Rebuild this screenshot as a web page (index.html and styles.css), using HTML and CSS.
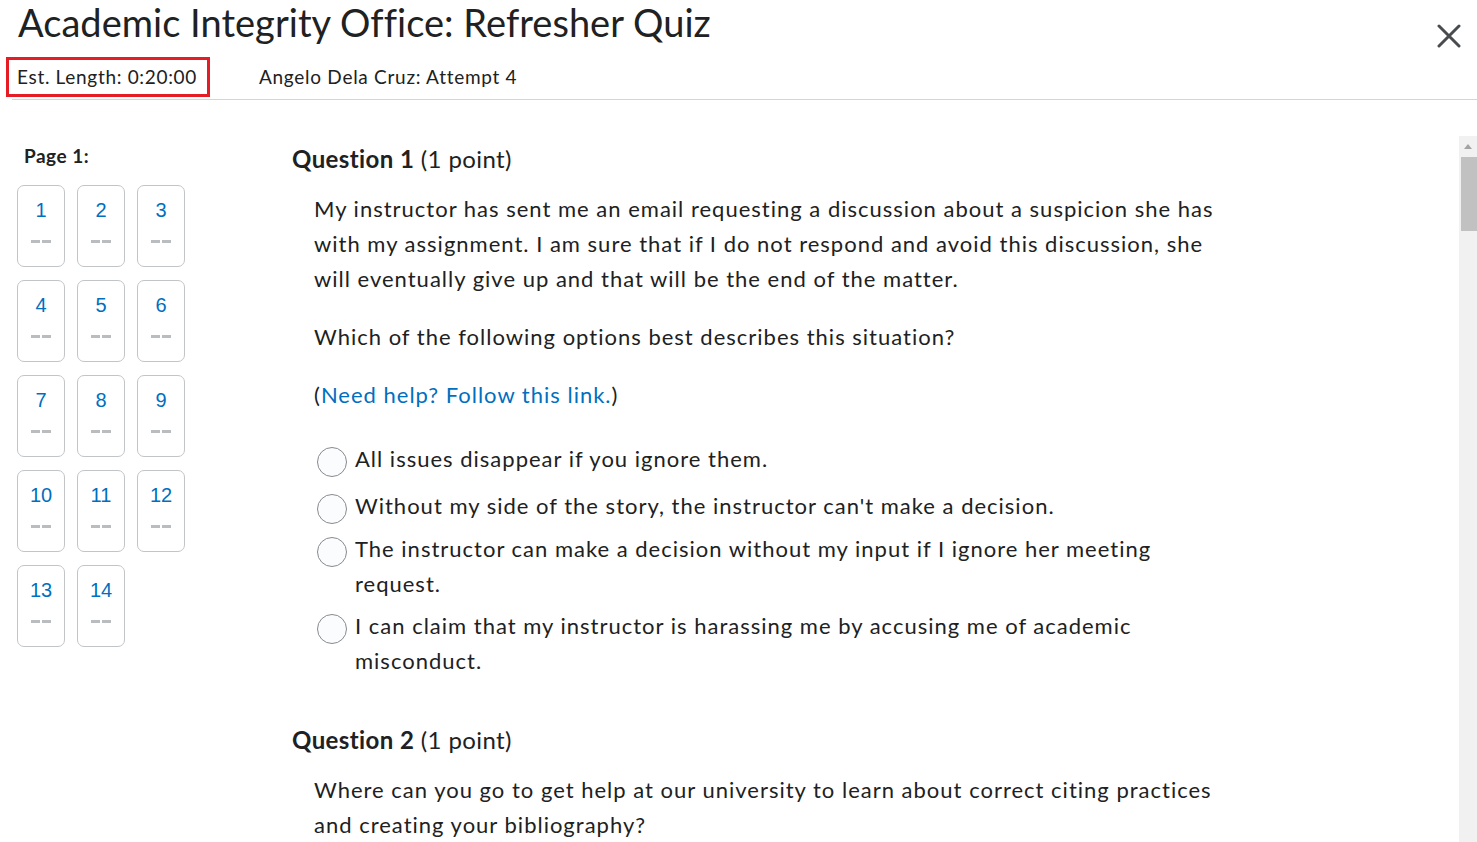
FILE: index.html
```html
<!DOCTYPE html>
<html lang="en">
<head>
<meta charset="utf-8">
<title>Academic Integrity Office: Refresher Quiz</title>
<link rel="stylesheet" href="styles.css">
</head>
<body>
<div class="page">
  <header class="header">
    <div class="header-main">
      <h1 class="title">Academic Integrity Office: Refresher Quiz</h1>
      <div class="meta">
        <div class="est">Est. Length: 0:20:00</div>
        <div class="attempt">Angelo Dela Cruz: Attempt 4</div>
      </div>
    </div>
    <button class="close" aria-label="Close">
      <svg width="24" height="24" viewBox="0 0 24 24"><path d="M2 2 L22 22 M22 2 L2 22" stroke="#494c4e" stroke-width="3" stroke-linecap="round" fill="none"/></svg>
    </button>
  </header>
  <div class="rule"></div>
  <div class="body">
    <nav class="nav">
      <div class="nav-label">Page 1:</div>
      <div class="tiles">
        <a class="tile"><span class="num">1</span><span class="dash"><i></i><i></i></span></a>
        <a class="tile"><span class="num">2</span><span class="dash"><i></i><i></i></span></a>
        <a class="tile"><span class="num">3</span><span class="dash"><i></i><i></i></span></a>
        <a class="tile"><span class="num">4</span><span class="dash"><i></i><i></i></span></a>
        <a class="tile"><span class="num">5</span><span class="dash"><i></i><i></i></span></a>
        <a class="tile"><span class="num">6</span><span class="dash"><i></i><i></i></span></a>
        <a class="tile"><span class="num">7</span><span class="dash"><i></i><i></i></span></a>
        <a class="tile"><span class="num">8</span><span class="dash"><i></i><i></i></span></a>
        <a class="tile"><span class="num">9</span><span class="dash"><i></i><i></i></span></a>
        <a class="tile"><span class="num">10</span><span class="dash"><i></i><i></i></span></a>
        <a class="tile"><span class="num">11</span><span class="dash"><i></i><i></i></span></a>
        <a class="tile"><span class="num">12</span><span class="dash"><i></i><i></i></span></a>
        <a class="tile"><span class="num">13</span><span class="dash"><i></i><i></i></span></a>
        <a class="tile"><span class="num">14</span><span class="dash"><i></i><i></i></span></a>
      </div>
    </nav>
    <main class="main">
      <section class="question">
        <h2 class="q-title"><strong>Question 1</strong> (1 point)</h2>
        <div class="q-body">
          <p>My instructor has sent me an email requesting a discussion about a suspicion she has with my assignment. I am sure that if I do not respond and avoid this discussion, she will eventually give up and that will be the end of the matter.</p>
          <p>Which of the following options best describes this situation?</p>
          <p>(<a class="link">Need help? Follow this link.</a>)</p>
          <div class="options">
            <label class="option"><span class="radio"></span><span class="opt-text">All issues disappear if you ignore them.</span></label>
            <label class="option"><span class="radio"></span><span class="opt-text">Without my side of the story, the instructor can't make a decision.</span></label>
            <label class="option"><span class="radio"></span><span class="opt-text">The instructor can make a decision without my input if I ignore her meeting request.</span></label>
            <label class="option"><span class="radio"></span><span class="opt-text">I can claim that my instructor is harassing me by accusing me of academic misconduct.</span></label>
          </div>
        </div>
      </section>
      <section class="question q2">
        <h2 class="q-title"><strong>Question 2</strong> (1 point)</h2>
        <div class="q-body">
          <p>Where can you go to get help at our university to learn about correct citing practices and creating your bibliography?</p>
        </div>
      </section>
    </main>
    <div class="scrollbar">
      <div class="sb-arrow"></div>
      <div class="sb-thumb"></div>
    </div>
  </div>
</div>
</body>
</html>
```

FILE: styles.css
```css
* { box-sizing: border-box; }
html, body { margin: 0; padding: 0; }
body {
  width: 1477px;
  height: 842px;
  overflow: hidden;
  background: #fff;
  color: #202122;
  font-family: Lato, "Noto Sans", sans-serif;
}
.page { display: flex; flex-direction: column; height: 842px; }

.header { display: flex; justify-content: space-between; align-items: flex-start; }
.title {
  margin: 0 0 0 18px;
  font-size: 38px;
  font-weight: 400;
  line-height: 1.2;
  letter-spacing: 0.03px;
}
.meta { display: flex; align-items: center; margin: 11px 0 0 6px; }
.est {
  width: 204px;
  height: 40px;
  border: 3px solid #e51c24;
  padding: 0 8px;
  font-size: 19px;
  line-height: 34px;
  letter-spacing: 0.68px;
  white-space: nowrap;
}
.attempt { margin-left: 49px; font-size: 19px; line-height: 40px; letter-spacing: 0.72px; }
.close {
  margin: 24px 16px 0 0;
  padding: 0;
  border: 0;
  background: none;
  width: 24px;
  height: 24px;
  display: flex;
}
.rule { margin: 2px 0 0 12px; height: 1px; background: #d5d5d5; }

.body { display: flex; flex: 1; min-height: 0; }
.nav { width: 292px; flex: none; padding: 44px 0 0 17px; }
.nav-label { margin-left: 7px; font-size: 19px; font-weight: 700; line-height: 24px; letter-spacing: 0.5px; }
.tiles {
  margin-top: 17px;
  display: grid;
  grid-template-columns: repeat(3, 48px);
  column-gap: 12px;
  row-gap: 13px;
}
.tile {
  height: 82px;
  border: 1px solid #c2c5c8;
  border-radius: 7px;
  display: flex;
  flex-direction: column;
  align-items: center;
  padding-top: 12px;
}
.num {
  font-family: "Liberation Sans", Arial, sans-serif;
  font-size: 20px;
  line-height: 24px;
  color: #006fbf;
}
.dash { display: flex; gap: 2px; margin-top: 18px; }
.dash i { display: block; width: 9px; height: 3px; background: #babdc0; }

.main { flex: 1; padding-top: 44px; }
.question { width: 940px; }
.q-title { margin: 0; font-size: 24px; font-weight: 400; line-height: 30px; letter-spacing: 0.4px; }
.q-title strong { font-weight: 700; }
.q-body { padding-left: 22px; margin-top: 17px; font-size: 22px; line-height: 35px; letter-spacing: 1px; }
.q-body p { margin: 0 0 23px; }
.link { color: #006fbf; }
.options { margin-top: 29px; display: flex; flex-direction: column; }
.option { display: flex; align-items: flex-start; }
.option:nth-child(2) { margin-top: 11px; }
.option:nth-child(3) { margin-top: 7px; }
.option:nth-child(4) { margin-top: 7px; }
.radio {
  flex: none;
  width: 30px;
  height: 30px;
  margin: 6px 8px 0 3px;
  border: 1px solid #878a8e;
  border-radius: 50%;
  background: #fbfcfe;
}
.q2 { margin-top: 47px; }

.scrollbar {
  flex: none;
  width: 18px;
  margin-top: 36px;
  background: #f1f1f1;
  display: flex;
  flex-direction: column;
  align-items: flex-end;
}
.sb-arrow {
  align-self: center;
  margin-top: 8px;
  width: 0;
  height: 0;
  border-left: 4px solid transparent;
  border-right: 4px solid transparent;
  border-bottom: 5px solid #a3a3a3;
}
.sb-thumb { margin-top: 8px; width: 16px; height: 74px; background: #c1c1c1; }
```
